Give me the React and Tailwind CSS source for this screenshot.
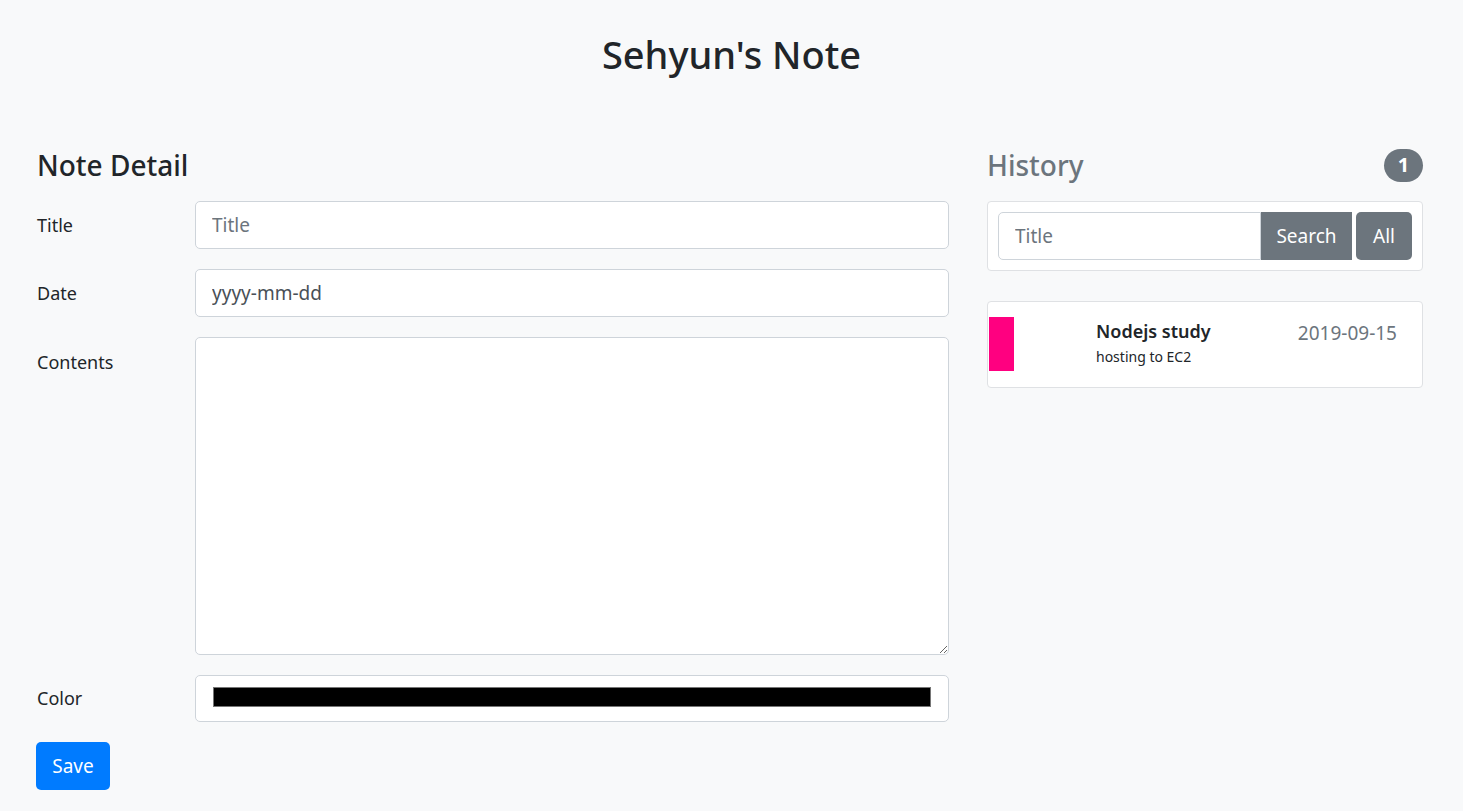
import React from "react";

export default function App() {
  const font = { fontFamily: '"Noto Sans", "Open Sans", sans-serif' };
  return (
    <div className="min-h-[811px] w-full bg-[#f8f9fa] text-[#212529]" style={font}>
      <div className="flex justify-center pt-[27px]">
        <h1 className="text-[38px] leading-[54px] font-medium">Sehyun's Note</h1>
      </div>
      <div className="flex pl-[37px] pt-[70px] gap-[38px]">
        {/* left */}
        <div className="w-[912px] flex flex-col">
          <h4 className="text-[28px] leading-[34px] font-medium mb-[19px] mt-[-3px]">Note Detail</h4>
          <div className="flex items-center mb-[20px]">
            <label className="w-[158px] text-[18px]">Title</label>
            <input className="flex-1 h-[48px] px-[16px] text-[19px] bg-white border border-[#ced4da] rounded-[5px] placeholder-[#6c757d] outline-none" placeholder="Title" />
          </div>
          <div className="flex items-center mb-[20px]">
            <label className="w-[158px] text-[18px]">Date</label>
            <input className="flex-1 h-[48px] px-[16px] text-[19px] bg-white border border-[#ced4da] rounded-[5px] placeholder-[#495057] outline-none" placeholder="yyyy-mm-dd" />
          </div>
          <div className="flex items-start mb-[20px]">
            <label className="w-[158px] text-[18px] pt-[12px]">Contents</label>
            <textarea className="flex-1 h-[318px] px-[16px] py-[8px] text-[19px] bg-white border border-[#ced4da] rounded-[5px] outline-none" />
          </div>
          <div className="flex items-center mb-[20px]">
            <label className="w-[158px] text-[18px]">Color</label>
            <div className="flex-1 h-[47px] bg-white border border-[#ced4da] rounded-[5px] flex items-center px-[17px]">
              <div className="w-full h-[20px] bg-black border border-[#767676] mt-[-3px]" />
            </div>
          </div>
          <div>
            <button className="h-[48px] w-[74px] bg-[#007bff] text-white text-[19px] rounded-[5px] ml-[-1px]">Save</button>
          </div>
        </div>
        {/* right */}
        <div className="w-[436px] flex flex-col">
          <div className="flex items-center justify-between mb-[19px] mt-[-3px] h-[34px]">
            <h4 className="text-[28px] leading-[34px] font-medium text-[#6c757d]">History</h4>
            <span className="h-[33px] min-w-[39px] px-[12px] rounded-full bg-[#6c757d] text-white text-[20px] font-bold flex items-center justify-center">1</span>
          </div>
          <div className="bg-white border border-[#dfe1e4] rounded-[4px] p-[10px] flex">
            <input className="flex-1 h-[48px] px-[16px] text-[19px] bg-white border border-[#ced4da] rounded-l-[5px] placeholder-[#6c757d] outline-none min-w-0" placeholder="Title" />
            <button className="h-[48px] w-[91px] bg-[#6c757d] text-white text-[19px]">Search</button>
            <button className="h-[48px] w-[56px] ml-[4px] bg-[#6c757d] text-white text-[19px] rounded-[5px]">All</button>
          </div>
          <div className="mt-[30px] bg-white border border-[#dfe1e4] rounded-[4px] h-[87px] flex items-start pt-[15px]">
            <div className="w-[25px] h-[54px] bg-[#ff0080] ml-[1px]" />
            <div className="ml-[82px] flex flex-col">
              <span className="text-[18px] font-semibold leading-[28px]">Nodejs study</span>
              <span className="text-[14px] leading-[24px]">hosting to EC2</span>
            </div>
            <span className="ml-auto mr-[25px] text-[19px] text-[#6c757d] mt-[2px]">2019-09-15</span>
          </div>
        </div>
      </div>
    </div>
  );
}
